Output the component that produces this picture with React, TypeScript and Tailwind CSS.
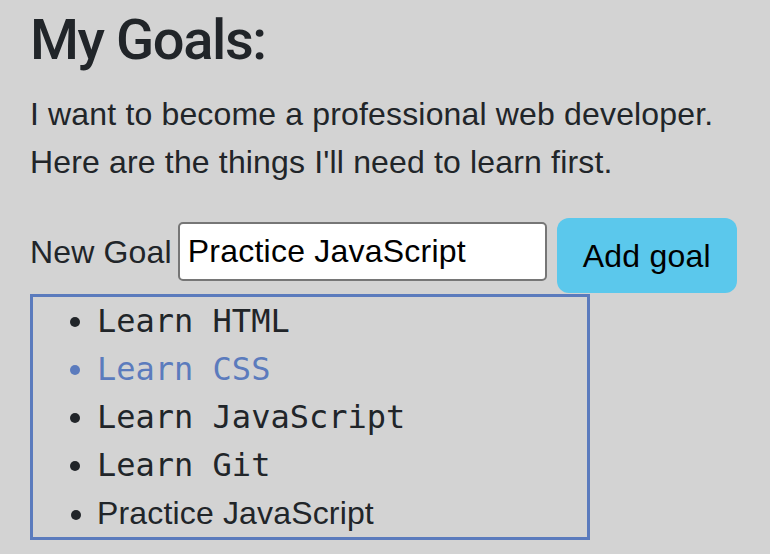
import { useState } from "react";

const goals = [
  { text: "Learn HTML", mono: true, active: false },
  { text: "Learn CSS", mono: true, active: true },
  { text: "Learn JavaScript", mono: true, active: false },
  { text: "Learn Git", mono: true, active: false },
  { text: "Practice JavaScript", mono: false, active: false },
];

export default function App() {
  const [value, setValue] = useState("Practice JavaScript");

  return (
    <div className="min-h-[554px] bg-[#d3d3d3] pl-[30px] pt-[7px] text-[#212529] font-['Liberation_Sans',sans-serif] tracking-[0.01em]">
      <h3 className="text-[56px] leading-[67px] font-medium mb-4 font-['Roboto',sans-serif] tracking-[-0.025em]">My Goals:</h3>
      <p className="text-[32px] leading-[48px] mb-8">
        I want to become a professional web developer.
        <br />
        Here are the things I'll need to learn first.
      </p>

      <div className="flex items-start">
        <label className="text-[32px] leading-[48px] mt-[10px] mr-[6px]">New Goal</label>
        <input
          value={value}
          onChange={(e) => setValue(e.target.value)}
          className="mt-1 w-[369px] h-[59px] border-2 border-[#767676] rounded-[5px] bg-white pl-[8px] text-[32px] text-black outline-none tracking-[0.007em]"
        />
        <button className="ml-[10px] w-[180px] h-[75px] rounded-[12px] bg-[#5bc8ec] text-[32px] text-black tracking-[0.007em]">
          Add goal
        </button>
      </div>

      <ul className="mt-px w-[560px] border-[3px] border-[#5b7bbd] list-disc pl-[64px] text-[32px] leading-[48px]">
        {goals.map((g) => (
          <li
            key={g.text}
            className={`${g.mono ? "font-['DejaVu_Sans_Mono',monospace] tracking-normal" : ""} ${g.active ? "text-[#5b7bbd]" : ""}`}
          >
            {g.text}
          </li>
        ))}
      </ul>
    </div>
  );
}
